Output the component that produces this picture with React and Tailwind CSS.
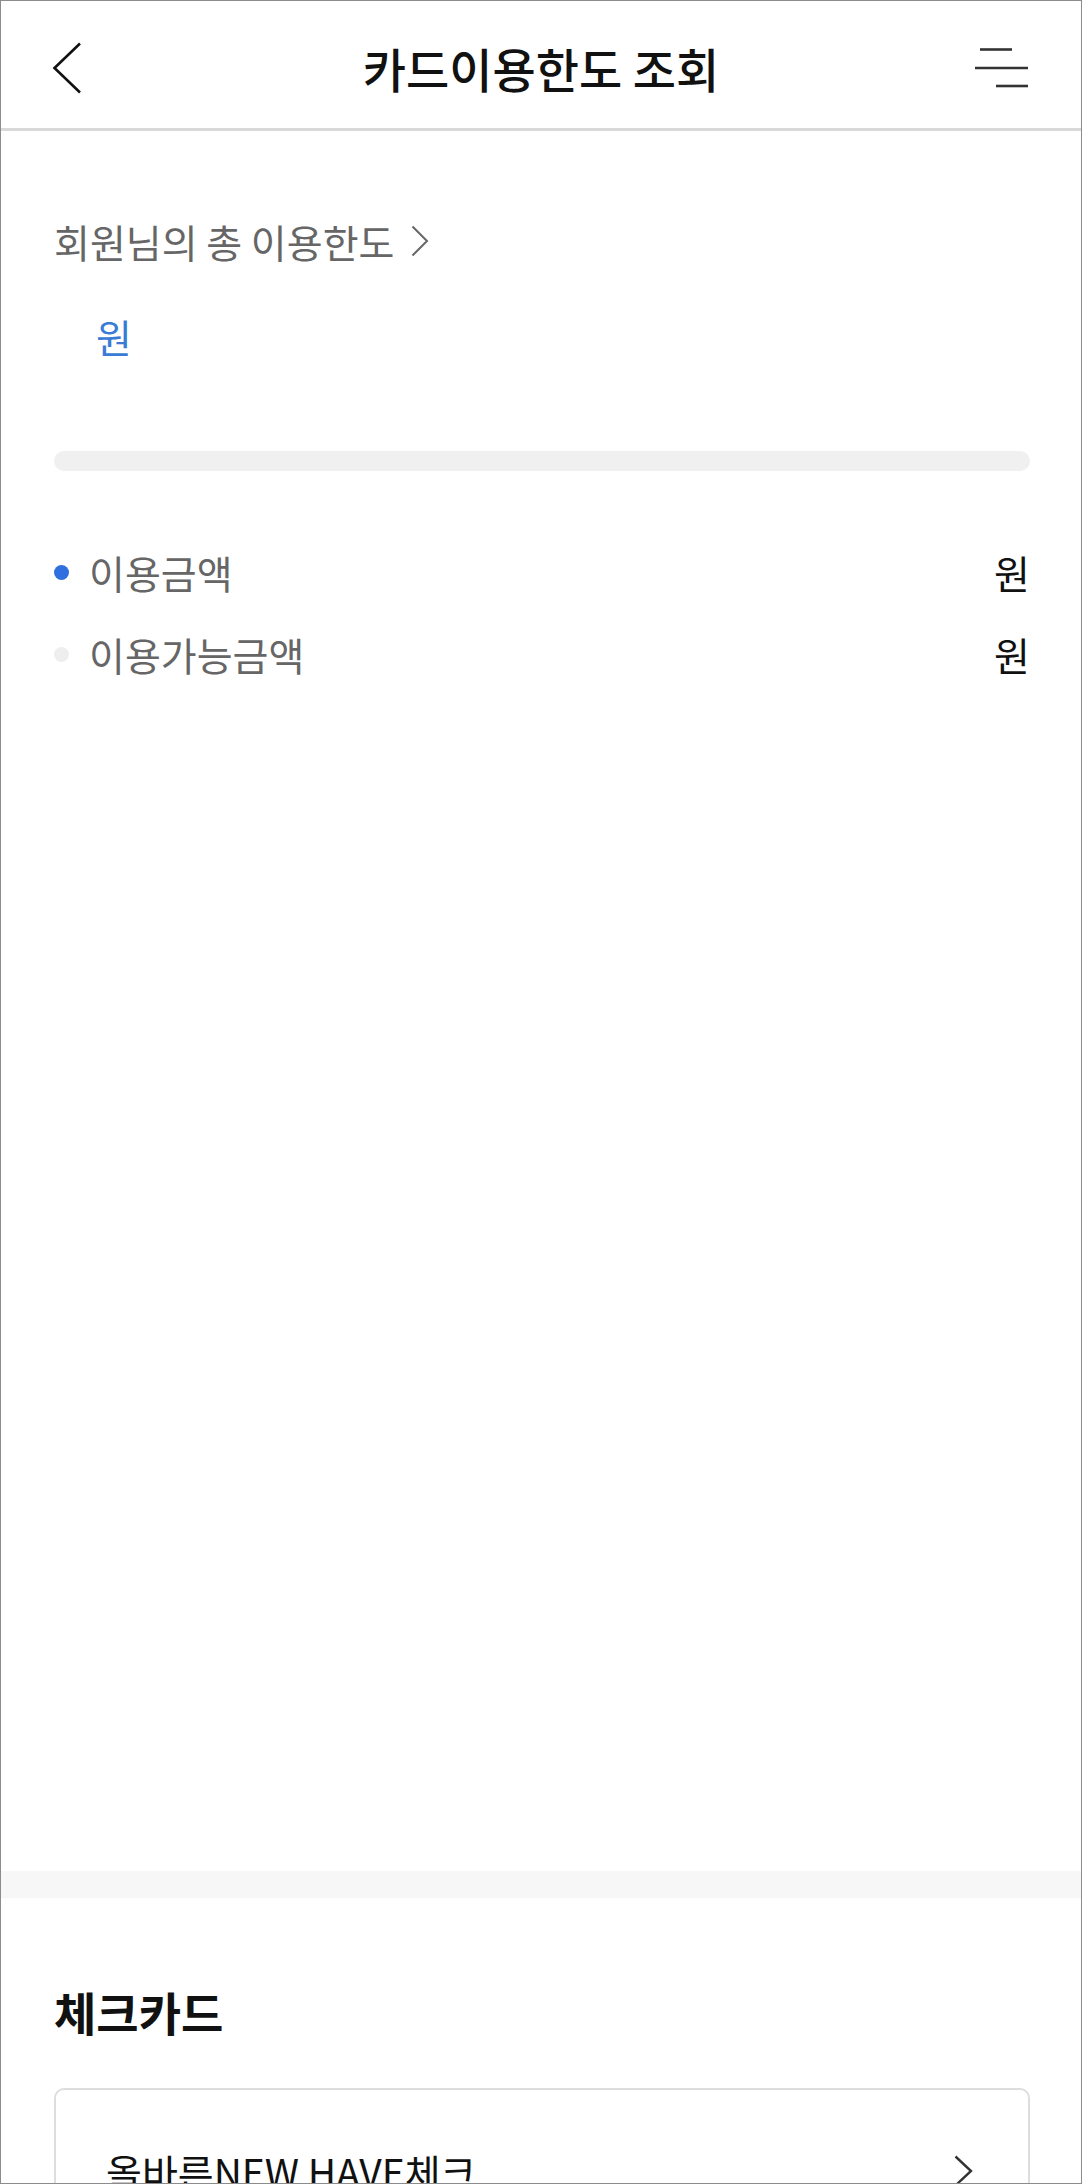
import React from "react";

const font = "font-['Noto_Sans_CJK_KR',sans-serif]";

function BackIcon() {
  return (
    <svg width="30" height="52" viewBox="0 0 30 52" fill="none">
      <polyline points="28,1.5 2.5,26 28,50.5" stroke="#111" strokeWidth="2.6" />
    </svg>
  );
}

function MenuIcon() {
  return (
    <svg width="56" height="40" viewBox="0 0 56 40" fill="none">
      <line x1="6" y1="1.5" x2="38" y2="1.5" stroke="#333" strokeWidth="2.6" />
      <line x1="1" y1="20" x2="54" y2="20" stroke="#333" strokeWidth="2.6" />
      <line x1="22" y1="38" x2="54" y2="38" stroke="#333" strokeWidth="2.6" />
    </svg>
  );
}

function Chevron({ color = "#666", w = 18, h = 32, sw = 2 }) {
  return (
    <svg width={w} height={h} viewBox={`0 0 ${w} ${h}`} fill="none">
      <polyline points={`1.5,1.5 ${w - 2},${h / 2} 1.5,${h - 1.5}`} stroke={color} strokeWidth={sw} />
    </svg>
  );
}

// 이용금액 / 이용가능금액 행
function AmountRow({ label, dot }) {
  return (
    <div className="flex items-center h-[48px]">
      <span className={`w-[15px] h-[15px] rounded-full ${dot}`} />
      <span className="ml-[20px] text-[39px] leading-[48px] text-[#666666]">{label}</span>
      <span className="ml-auto text-[39px] leading-[48px] text-[#111111]">원</span>
    </div>
  );
}

export default function App() {
  return (
    <div className={`${font} w-[1082px] h-[2184px] overflow-hidden border border-[#8c8c8c] bg-white`}>
      {/* 헤더 */}
      <header className="h-[130px] pt-[7px] pl-[51px] pr-[51px] flex items-center border-b-[3px] border-[#d9d9d9]">
        <div className="flex-1 flex items-center">
          <BackIcon />
        </div>
        <h1 className="text-[47px] leading-[58px] font-medium text-[#111111]">카드이용한도 조회</h1>
        <div className="flex-1 flex items-center justify-end">
          <MenuIcon />
        </div>
      </header>

      {/* 총 이용한도 */}
      <section className="h-[1740px] pt-[86px] pl-[53px] pr-[51px]">
        <div className="flex items-center h-[48px]">
          <span className="text-[39px] leading-[48px] text-[#666666]">회원님의 총 이용한도</span>
          <span className="ml-[17px] flex items-center">
            <Chevron color="#666" w={18} h={32} sw={2} />
          </span>
        </div>
        <div className="mt-[47px] pl-[42px] h-[48px] text-[39px] leading-[48px] text-[#3a7bd5]">원</div>

        <div className="mt-[91px] h-[20px] rounded-full bg-[#f0f0f0]" />

        <div className="mt-[77px] flex flex-col gap-[34px]">
          <AmountRow label="이용금액" dot="bg-[#2f6fdf]" />
          <AmountRow label="이용가능금액" dot="bg-[#eeeeee]" />
        </div>
      </section>

      <div className="h-[27px] bg-[#f7f7f7]" />

      {/* 체크카드 */}
      <section className="pt-[84px] pl-[53px] pr-[51px]">
        <h2 className="text-[46px] leading-[58px] font-bold text-[#111111]">체크카드</h2>
        <div className="mt-[48px] h-[300px] border-2 border-[#dddddd] rounded-[10px] pt-[57px] pl-[50px] pr-[55px]">
          <div className="flex items-center h-[48px]">
            <span className="text-[39px] leading-[48px] text-[#111111]">올바른NEW HAVE체크</span>
            <span className="ml-auto flex items-center">
              <Chevron color="#333" w={19} h={32} sw={2.4} />
            </span>
          </div>
        </div>
      </section>
    </div>
  );
}
